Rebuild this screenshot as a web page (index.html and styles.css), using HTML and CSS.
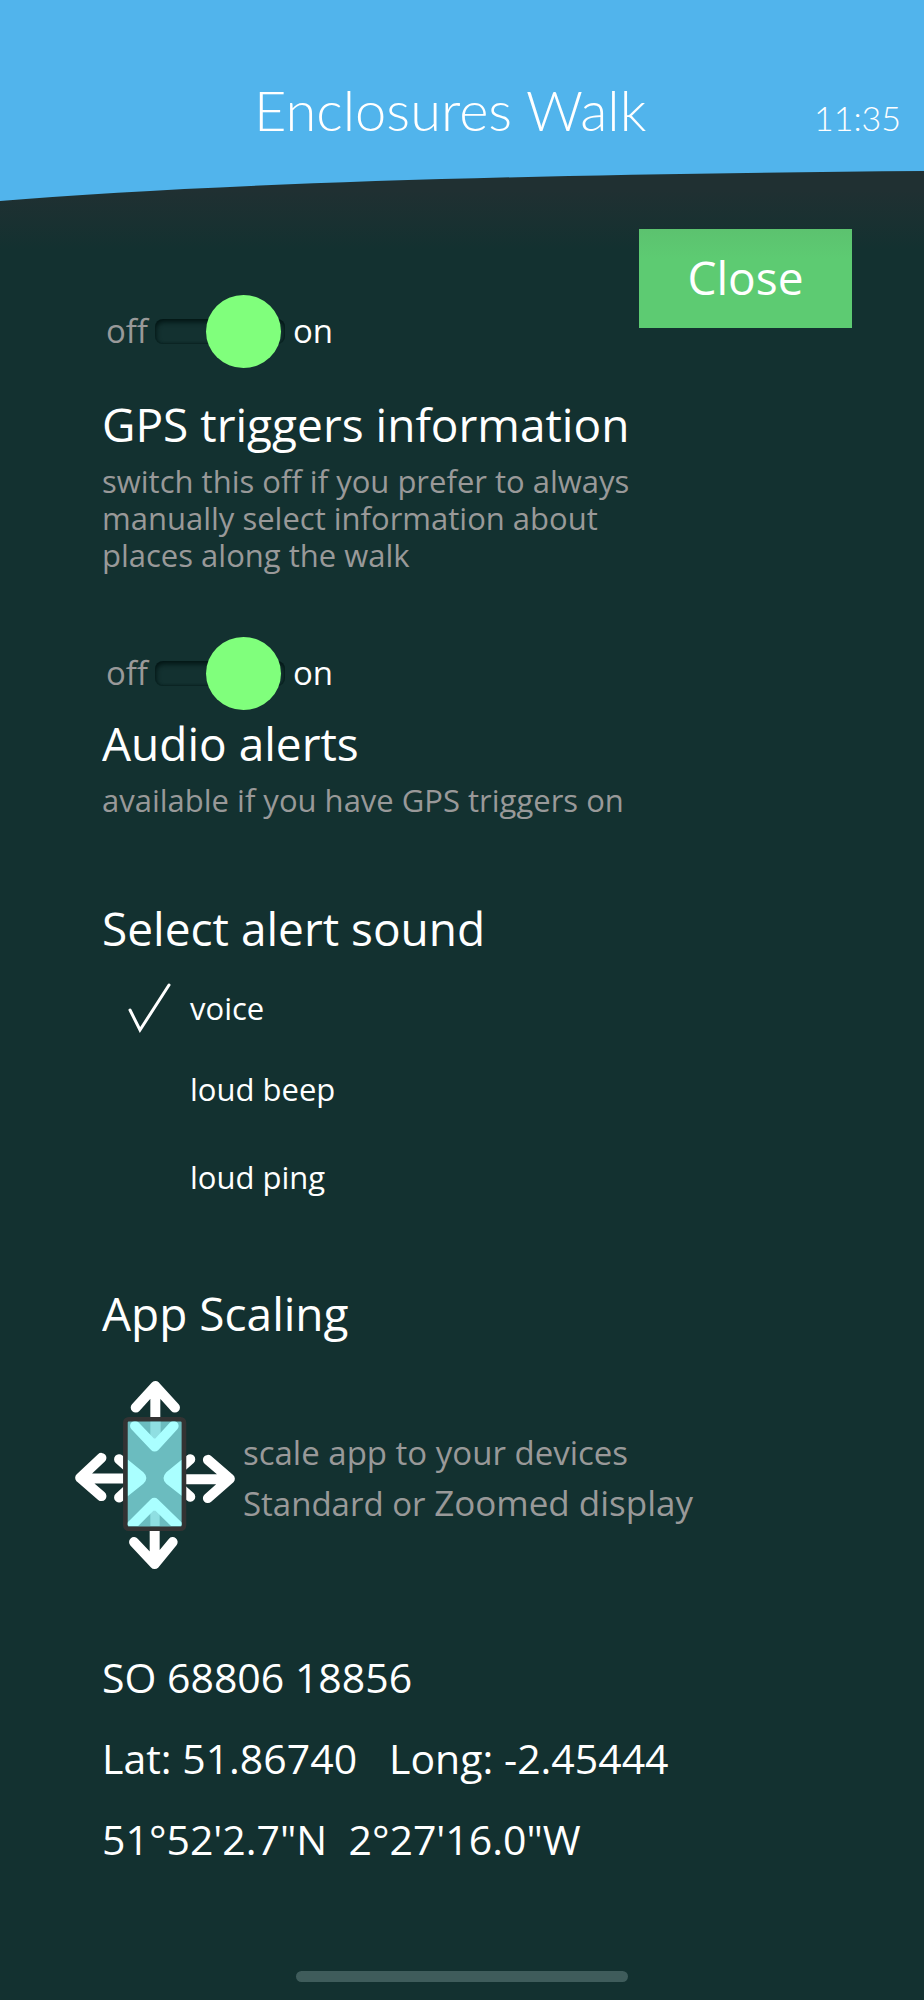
FILE: index.html
```html
<!DOCTYPE html>
<html lang="en">
<head>
    <meta charset="UTF-8">
    <meta name="viewport" content="width=device-width, initial-scale=1.0">
    <title>Enclosures Walk</title>
    <link rel="stylesheet" href="styles.css">
</head>
<body>
    <header class="header">
        <svg class="header-bg" viewBox="0 0 924 202" preserveAspectRatio="none" aria-hidden="true">
            <path fill="#51b4ec" d="M0 0H924V171Q300 176 0 201Z"/>
        </svg>
        <h1>Enclosures Walk</h1>
        <time class="clock">11:35</time>
    </header>

    <main class="settings">
        <div class="top-row">
            <label class="switch">
                <span class="off">off</span>
                <input type="checkbox" aria-label="GPS triggers information" checked>
                <span>on</span>
            </label>
            <button class="close" type="button">Close</button>
        </div>

        <section class="group">
            <h2>GPS triggers information</h2>
            <p class="note">switch this off if you prefer to always manually select information about places along the walk</p>
        </section>

        <label class="switch">
            <span class="off">off</span>
            <input type="checkbox" aria-label="Audio alerts" checked>
            <span>on</span>
        </label>
        <section class="audio">
            <h2>Audio alerts</h2>
            <p class="note">available if you have GPS triggers on</p>
        </section>

        <section class="sound">
            <h2>Select alert sound</h2>
            <div class="options">
                <label class="option">
                    <input type="radio" name="sound" checked>
                    <svg class="check" viewBox="0 0 42 48" aria-hidden="true"><path d="M1 26 11 46 40 1"/></svg>
                    <span>voice</span>
                </label>
                <label class="option">
                    <input type="radio" name="sound">
                    <svg class="check" viewBox="0 0 42 48" aria-hidden="true"><path d="M1 26 11 46 40 1"/></svg>
                    <span>loud beep</span>
                </label>
                <label class="option">
                    <input type="radio" name="sound">
                    <svg class="check" viewBox="0 0 42 48" aria-hidden="true"><path d="M1 26 11 46 40 1"/></svg>
                    <span>loud ping</span>
                </label>
            </div>
        </section>

        <section class="scaling">
            <h2>App Scaling</h2>
            <div class="scale-row">
                <svg class="scale-icon" viewBox="45 62 480 565" aria-hidden="true">
                    <defs>
                        <clipPath id="screen"><rect x="203" y="184" width="162" height="314" rx="5"/></clipPath>
                    </defs>
                    <!-- arrows outside the phone -->
                    <g class="arrows">
                        <path d="M286 175V90M227 142 286 77 345 142M280 86H292"/>
                        <path d="M284 505V600M222 546 284 612 338 546M278 602H290"/>
                        <path d="M195 355H75M124 293 60 353 124 408M69 350V358"/>
                        <path d="M370 357H495M444 299 510 356 444 414M500 352V360"/>
                        <path d="M177 297 200 318M177 412 200 391M391 297 368 318M391 410 368 390"/>
                    </g>
                    <rect x="196" y="177" width="176" height="329" rx="10" fill="#6bbcbf" stroke="#333" stroke-width="14"/>
                    <!-- arrows on the screen -->
                    <g clip-path="url(#screen)">
                        <path fill="#8fdfe2" d="M271 184H302V250H271ZM271 498H299V430H271Z"/>
                        <path fill="#aff" d="M203 298 250 336Q268 353 250 371L203 408ZM365 299 319 336Q302 354 319 371L365 407Z"/>
                        <g class="inner"><path d="M225 197 284 259 341 197M280 250H288M208 503 283 428 360 503M279 437H287"/></g>
                    </g>
                </svg>
                <p class="scale-text">scale app to your devices<br>Standard or <span class="larger">Zoomed display</span></p>
            </div>
        </section>

        <section class="position">
            <p>SO 68806 18856</p>
            <p>Lat: 51.86740   Long: -2.45444</p>
            <p>51°52'2.7"N  2°27'16.0"W</p>
        </section>
    </main>

    <div class="home-bar"></div>
</body>
</html>
```
FILE: styles.css
```css
* {
    box-sizing: border-box;
}
body {
    margin: 0;
    min-height: 100vh;
    display: flex;
    flex-direction: column;
    font-family: "Open Sans", "Noto Sans", sans-serif;
    font-size: 31px;
    color: white;
    background: #133130 linear-gradient(#203032, #203032 190px, #133130 250px) no-repeat;
}
h1, h2, p {
    margin: 0;
    font-weight: 400;
}
.header {
    position: relative;
    height: 202px;
    padding: 0 23px 64px 254px;
    display: flex;
    justify-content: space-between;
    align-items: flex-end;
    font-family: Lato, sans-serif;
    font-weight: 300;
}
.header-bg {
    position: absolute;
    inset: 0;
    width: 100%;
    height: 100%;
}
.header h1, .clock {
    position: relative;
}
.header h1 {
    font-size: 56px;
    line-height: 56px;
    font-weight: 300;
}
.clock {
    font-size: 34px;
    line-height: 40px;
}
.settings {
    padding: 27px 72px 0 102px;
}
.top-row {
    display: flex;
    justify-content: space-between;
    height: 139px;
}
.top-row .switch {
    align-self: flex-end;
}
.close {
    width: 213px;
    height: 99px;
    padding: 0 0 4px;
    border: none;
    background: linear-gradient(#5cc26f, #5dcb72 30px);
    color: white;
    font: inherit;
    font-size: 46px;
    cursor: pointer;
}
.switch {
    display: flex;
    align-items: center;
    width: max-content;
    height: 73px;
    padding-left: 4px;
    font-size: 33px;
    line-height: 44px;
    cursor: pointer;
}
.switch span {
    padding-bottom: 2px;
}
.switch .off {
    width: 49px;
    color: #999;
}
.switch input {
    appearance: none;
    position: relative;
    width: 130px;
    height: 25px;
    margin: 0 8px 0 0;
    border-radius: 8px;
    box-shadow: inset 1px 3px 5px #021514, inset -1px -1px 2px #0a2423;
}
.switch input::before {
    content: "";
    position: absolute;
    top: -24px;
    left: 0;
    width: 75px;
    height: 73px;
    border-radius: 50%;
    background: #999;
}
.switch input:checked::before {
    left: 51px;
    background: #80ff7c;
}
h2 {
    font-size: 46px;
    line-height: 64px;
}
.note {
    max-width: 560px;
    margin-top: 7px;
    line-height: 37px;
    color: #999;
}
.group {
    margin: 24px 0 63px;
}
.audio {
    margin-top: 1px;
}
.sound {
    margin-top: 77px;
}
.options {
    display: grid;
    grid-template-rows: 78px 84px 92px;
    margin-top: 9px;
    padding-left: 27px;
}
.option {
    display: grid;
    grid-template-columns: 42px auto;
    column-gap: 19px;
    align-items: center;
    justify-content: start;
    cursor: pointer;
}
.option input, .check {
    grid-area: 1 / 1;
    width: 42px;
    height: 48px;
    margin: 0;
}
.option input {
    appearance: none;
}
.check {
    visibility: hidden;
    overflow: visible;
    fill: none;
    stroke: white;
    stroke-width: 3;
    stroke-linecap: round;
}
.option input:checked + .check {
    visibility: visible;
}
.scaling {
    margin-top: 58px;
}
.scale-row {
    display: flex;
    align-items: center;
    gap: 8px;
    margin: 36px 0 0 -27px;
}
.scale-icon {
    flex: none;
    width: 160px;
    height: 188px;
}
.arrows, .inner {
    fill: none;
    stroke: white;
    stroke-width: 30;
    stroke-linejoin: round;
}
.arrows path, .inner path {
    stroke-linecap: round;
}
.inner {
    stroke: #aff;
}
.scale-text {
    margin-top: 6px;
    font-size: 33px;
    line-height: 50px;
    color: #999;
}
.larger {
    font-size: 35px;
}
.position {
    margin-top: 68px;
    font-size: 41px;
    line-height: 81px;
}
.position p {
    white-space: pre;
}
.home-bar {
    width: 36%;
    height: 11px;
    margin: auto auto 18px;
    border-radius: 6px;
    background: #3f5c5b;
}
```
